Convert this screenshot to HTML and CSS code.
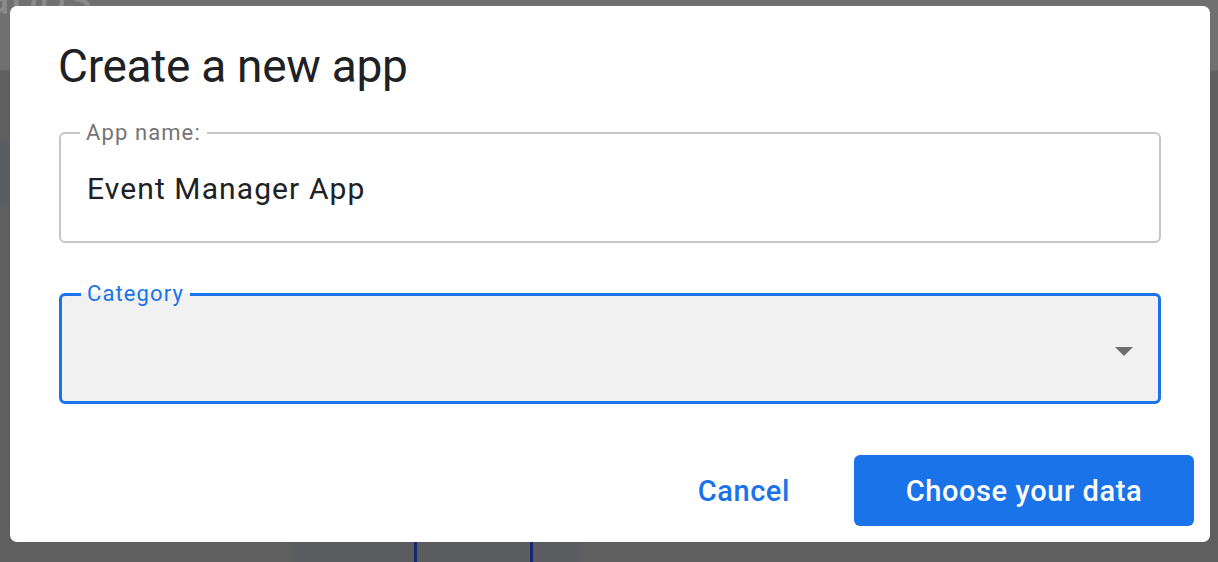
FILE: index.html
```html
<!DOCTYPE html>
<html lang="en">
<head>
<meta charset="utf-8">
<title>Create a new app</title>
<link rel="stylesheet" href="styles.css">
</head>
<body>
<div class="page">
  <div class="page-head"><span class="page-title">All apps</span></div>
  <div class="page-band"></div>
  <div class="page-foot"><span class="tab-line tl1"></span><span class="tab-line tl2"></span></div>
</div>
<div class="overlay">
  <div class="dialog" role="dialog" aria-labelledby="dlg-title">
    <h1 class="dialog-title" id="dlg-title">Create a new app</h1>
    <fieldset class="field">
      <legend class="field-label">App name:</legend>
      <div class="field-value">Event Manager App</div>
    </fieldset>
    <fieldset class="field field-select">
      <legend class="field-label">Category</legend>
      <div class="field-value"></div>
      <svg class="caret" width="18" height="9" viewBox="0 0 18 9"><path d="M0 0H18L9 9Z" fill="#6f6f6f"/></svg>
    </fieldset>
    <div class="actions">
      <button class="btn btn-text">Cancel</button>
      <button class="btn btn-primary">Choose your data</button>
    </div>
  </div>
</div>
</body>
</html>
```
FILE: styles.css
```css
html, body {
  margin: 0;
  height: 100%;
}
body {
  background: #5f5f5f;
  font-family: Roboto, "Liberation Sans", Arial, sans-serif;
  overflow: hidden;
}
.page {
  position: absolute;
  inset: 0;
}
.page-head {
  height: 70px;
  background: #707070;
  border-bottom: 1px solid #666;
  overflow: hidden;
}
.page-title {
  display: block;
  margin: -32px 0 0 -86px;
  font-size: 50px;
  color: #8a8a8a;
  white-space: nowrap;
}
.page-band {
  margin-top: 70px;
  height: 66px;
  width: 10px;
  background: #5a5e64;
}
.page-foot {
  position: absolute;
  left: 292px;
  bottom: 0;
  width: 290px;
  height: 20px;
  background: #5a5c60;
}
.tab-line {
  position: absolute;
  top: 0;
  bottom: 0;
  width: 3px;
  background: #15296e;
}
.tl1 { left: 122px; }
.tl2 { left: 238px; }
.overlay {
  position: fixed;
  inset: 0;
  padding: 6px 8px 0 10px;
}
.dialog {
  box-sizing: border-box;
  width: 1200px;
  height: 536px;
  background: #fff;
  border-radius: 7px;
  padding: 0 48px 0 48px;
  display: flex;
  flex-direction: column;
}
.dialog-title {
  margin: 34px 0 0 0;
  font-size: 46px;
  line-height: 52px;
  font-weight: 400;
  color: #202124;
  letter-spacing: -0.3px;
}
.field {
  margin: 29px 1px 0 1px;
  padding: 0 26px;
  height: 122px;
  box-sizing: border-box;
  border: 2px solid #c6c6c6;
  border-radius: 6px;
  position: relative;
}
.field-label {
  padding: 0 6px;
  margin-left: -7px;
  font-size: 22px;
  line-height: 24px;
  color: #757575;
  letter-spacing: 1.1px;
}
.field-value {
  font-size: 30px;
  line-height: 34px;
  color: #202124;
  padding-top: 27px;
  letter-spacing: 1.1px;
}
.field-select {
  margin-top: 39px;
  border: 3px solid #1a73e8;
  background: #f1f1f1;
}
.field-select .field-label {
  color: #1a73e8;
}
.caret {
  position: absolute;
  right: 25px;
  top: 41px;
}
.actions {
  margin-top: auto;
  margin-bottom: 16px;
  display: flex;
  justify-content: flex-end;
  align-items: center;
  gap: 64px;
  margin-right: -32px;
}
.btn {
  font-family: Roboto, "Liberation Sans", Arial, sans-serif;
  font-size: 29px;
  font-weight: 500;
  border: none;
  border-radius: 6px;
  cursor: pointer;
  letter-spacing: 0.6px;
}
.btn-text {
  background: none;
  color: #1a73e8;
  padding: 0;
}
.btn-primary {
  background: #1a73e8;
  color: #fff;
  width: 340px;
  height: 71px;
}
```
